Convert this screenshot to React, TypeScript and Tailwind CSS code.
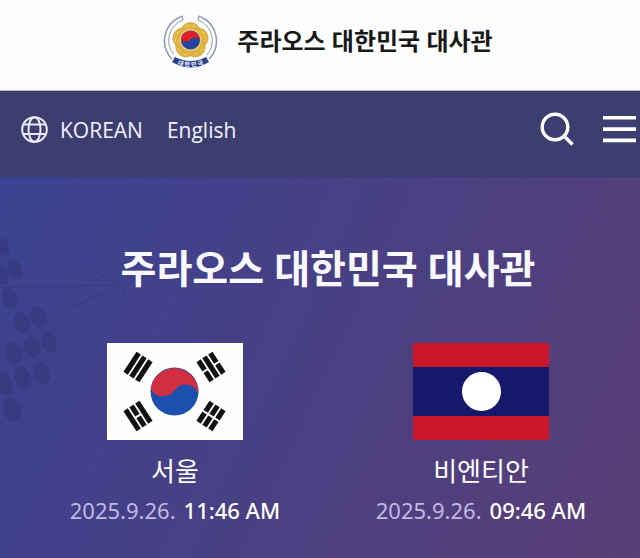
import React from "react";

const BARS = [-7, 0, 7];
const PETALS = [0, 72, 144, 216, 288];

function Trigram({ x, y, angle, broken }: { x: number; y: number; angle: number; broken: boolean[] }) {
  return (
    <g transform={`translate(${x} ${y}) rotate(${angle})`} fill="#111">
      {BARS.map((offset, i) =>
        broken[i] ? (
          <g key={offset}>
            <rect x="-12" y={offset - 2.6} width="11" height="5.2" />
            <rect x="1" y={offset - 2.6} width="11" height="5.2" />
          </g>
        ) : (
          <rect key={offset} x="-12" y={offset - 2.6} width="24" height="5.2" />
        ),
      )}
    </g>
  );
}

function KoreaFlag() {
  return (
    <svg className="h-[97px] w-[136px]" viewBox="0 0 136 97" role="img" aria-label="대한민국">
      <rect width="136" height="97" fill="#fefefe" />
      <g transform="translate(67.5 48.5)">
        <circle r="24" fill="#1d4fae" />
        <path d="M-23.4-5A24 24 0 0 1 23.8 3C22-4 17-7 11-7C3-7 1-1-3 2C-13 8-24 3-23.4-5Z" fill="#d12f40" />
      </g>
      <Trigram x={31} y={24} angle={-57} broken={[false, false, false]} />
      <Trigram x={104} y={24} angle={57} broken={[true, false, true]} />
      <Trigram x={31} y={73} angle={57} broken={[false, true, false]} />
      <Trigram x={104} y={73} angle={-57} broken={[true, true, true]} />
    </svg>
  );
}

function LaosFlag() {
  return (
    <svg className="h-[97px] w-[136px]" viewBox="0 0 136 97" role="img" aria-label="라오스">
      <rect width="136" height="97" fill="#cb152b" />
      <rect y="24" width="136" height="49" fill="#15186b" />
      <circle cx="68.5" cy="48.5" r="19.5" fill="#fff" />
    </svg>
  );
}

function Emblem() {
  return (
    <svg className="h-14 w-14 shrink-0" viewBox="0 0 56 56" aria-hidden="true">
      <g fill="none" stroke="#8f9ab2">
        <path d="M17 4A26 26 0 0 0 9 46M38 4A26 26 0 0 1 46 46" strokeWidth="1.5" />
        <path d="M20 7A22 22 0 0 0 11 42M35 7A22 22 0 0 1 44 42" strokeWidth="1" />
        <path d="M17 4l2-1 1 4M38 4l-2-1-1 4" strokeWidth="1.2" />
      </g>
      <g fill="#dfb340" stroke="#cfa238" strokeWidth="0.6">
        {PETALS.map((a) => (
          <ellipse key={a} transform={`rotate(${a} 27.5 27.5)`} cx="27.5" cy="18" rx="9.5" ry="8.5" />
        ))}
      </g>
      <g fill="none" stroke="#f0d27a" strokeWidth="0.8">
        {PETALS.map((a) => (
          <path key={a} transform={`rotate(${a} 27.5 27.5)`} d="M22 14q2-2 4-1M33 14q-2-2-4-1" />
        ))}
      </g>
      <circle cx="27.5" cy="27" r="10.8" fill="#ecd48e" />
      <g transform="translate(27.5 27) scale(0.4)">
        <circle r="24" fill="#27459f" />
        <path d="M-23.4-5A24 24 0 0 1 23.8 3C22-4 17-7 11-7C3-7 1-1-3 2C-13 8-24 3-23.4-5Z" fill="#df202b" />
      </g>
      <path d="M12 44Q28 52 43 44L46 49Q28 60 9 49Z" fill="#2b428f" />
      <defs>
        <path id="ribbon" d="M11 50Q28 57.5 44 50" />
      </defs>
      <text fill="#fff" fontSize="6" fontWeight="700" textAnchor="middle">
        <textPath href="#ribbon" startOffset="50%">대 한 민 국</textPath>
      </text>
    </svg>
  );
}

function GlobeIcon() {
  return (
    <svg className="h-7 w-7" viewBox="0 0 28 28" fill="none" stroke="#eceaff" strokeWidth="2" aria-hidden="true">
      <circle cx="14.5" cy="13.5" r="12.3" />
      <ellipse cx="14.5" cy="13.5" rx="6" ry="12.3" />
      <path d="M3.5 8.5h22M3.5 18h22" strokeWidth="1.8" />
    </svg>
  );
}

const DOTS = [
  [3, 70, 6, 9], [15, 93, 7, 10], [1, 98, 7, 10], [10, 121, 8, 11], [22, 146, 8, 11],
  [38, 140, 8, 11], [32, 170, 8, 11], [49, 165, 7, 11], [14, 176, 9, 11], [4, 207, 8, 12],
  [23, 201, 8, 12], [42, 196, 8, 12], [12, 233, 9, 12],
];

function Backdrop() {
  return (
    <svg className="pointer-events-none absolute top-0 left-0" width="160" height="270" viewBox="0 0 160 270" aria-hidden="true">
      <g fill="#30306a" opacity="0.38">
        {DOTS.map(([x, y, rx, ry]) => (
          <ellipse key={`${x}-${y}`} cx={x} cy={y} rx={rx} ry={ry} transform={`rotate(-20 ${x} ${y})`} />
        ))}
      </g>
      <g fill="none" stroke="#2b2d66" opacity="0.3">
        <path d="M0 110L70 109 120 108M45 143L118 109M82 88L120 107 128 122" />
        <path d="M44 42L62 50M68 52L92 66M112 114L90 160" opacity="0.5" />
      </g>
    </svg>
  );
}

function CityClock({ flag, city, date, time }: { flag: React.ReactNode; city: string; date: string; time: string }) {
  return (
    <div className="flex flex-col items-center">
      {flag}
      <h2 className="mt-3 text-[26px] leading-[38px] font-normal">{city}</h2>
      <p className="mt-1 flex gap-2 text-[22px] leading-8 whitespace-nowrap">
        <span className="text-[#c2b9e4]">{date}</span>
        <time className="font-medium">{time}</time>
      </p>
    </div>
  );
}

export default function App() {
  return (
    <div className="flex min-h-screen flex-col bg-[#484085] font-['Noto_Sans','Noto_Sans_CJK_KR',sans-serif] text-white">
      <header className="flex h-[91px] items-center justify-center gap-[18px] border-b border-[#b4bdcb] bg-[#fdfdfe] pr-1 pb-2 pl-5 text-[#191919]">
        <Emblem />
        <p className="text-2xl leading-8 font-bold">주라오스 대한민국 대사관</p>
      </header>

      <nav className="flex h-[86px] items-center justify-between bg-[#3d3e70] pr-1 pb-2 pl-5">
        <div className="flex items-center font-['Open_Sans',sans-serif] text-[21px] leading-8 text-[#f3f2ff]">
          <GlobeIcon />
          <a href="#ko" className="ml-3">KOREAN</a>
          <a href="#en" className="ml-6">English</a>
        </div>
        <div className="flex items-center gap-7">
          <button type="button" aria-label="검색">
            <svg className="block h-9 w-9" viewBox="0 0 36 36" fill="none" stroke="#fff" strokeWidth="3.4" aria-hidden="true">
              <circle cx="16" cy="15" r="12.8" />
              <path d="M25 24l8.5 8.5" />
            </svg>
          </button>
          <button type="button" aria-label="메뉴">
            <svg className="block h-7 w-[33px]" viewBox="0 0 33 28" fill="#fff" aria-hidden="true">
              <path d="M0 0h33v3.6H0zM0 11.3h33v3.6H0zM0 22.6h33v3.6H0z" />
            </svg>
          </button>
        </div>
      </nav>

      <main className="relative grow bg-linear-[115deg] from-[#3a4392] via-[#494083] to-[#5a3e76] pt-16 pr-[6px] pb-4 pl-[22px]">
        <Backdrop />
        <h1 className="relative text-center text-[39px] leading-[54px] font-bold text-[#f8f8ff]">주라오스 대한민국 대사관</h1>
        <div className="relative mt-12 grid grid-cols-2">
          <CityClock flag={<KoreaFlag />} city="서울" date="2025.9.26." time="11:46 AM" />
          <CityClock flag={<LaosFlag />} city="비엔티안" date="2025.9.26." time="09:46 AM" />
        </div>
      </main>
    </div>
  );
}
